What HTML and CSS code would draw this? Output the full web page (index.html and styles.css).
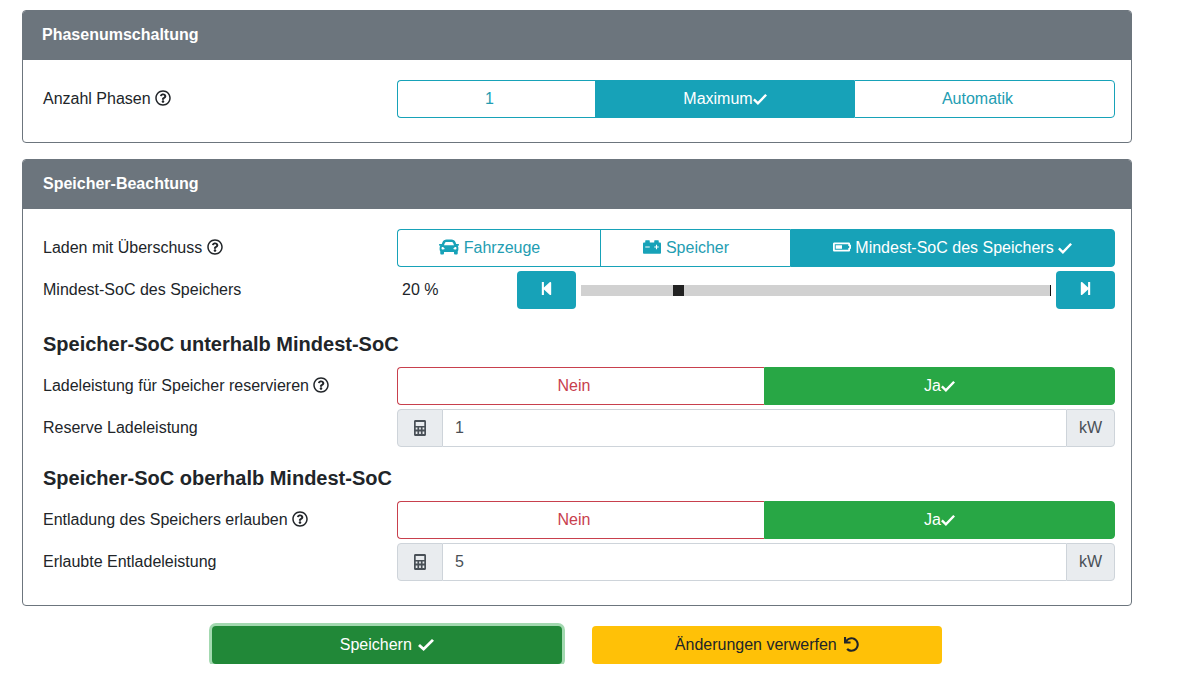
FILE: index.html
```html
<!DOCTYPE html>
<html lang="de">
<head>
<meta charset="utf-8">
<title>Ladeeinstellungen</title>
<link rel="stylesheet" href="styles.css">
</head>
<body>
<svg class="defs" aria-hidden="true">
  <symbol id="i-help" viewBox="0 0 512 512"><path d="M256 8C119.043 8 8 119.083 8 256c0 136.997 111.043 248 248 248s248-111.003 248-248C504 119.083 392.957 8 256 8zm0 448c-110.532 0-200-89.431-200-200 0-110.495 89.472-200 200-200 110.491 0 200 89.471 200 200 0 110.53-89.431 200-200 200zm107.244-255.2c0 67.052-72.421 68.084-72.421 92.863V300c0 6.627-5.373 12-12 12h-45.647c-6.627 0-12-5.373-12-12v-8.659c0-35.745 27.1-50.034 47.579-61.516 17.561-9.845 28.324-16.541 28.324-29.579 0-17.246-21.999-28.693-39.784-28.693-23.189 0-33.894 10.977-48.942 29.969-4.057 5.12-11.46 6.071-16.666 2.124l-27.824-21.098c-5.107-3.872-6.251-11.066-2.644-16.363C184.846 131.491 214.94 112 261.794 112c49.071 0 101.45 38.304 101.45 88.8zM298 368c0 23.159-18.841 42-42 42s-42-18.841-42-42 18.841-42 42-42 42 18.841 42 42z"/></symbol>
  <symbol id="i-check" viewBox="0 0 16 14" preserveAspectRatio="none"><path d="M1 7.5 5.6 12 15 2" fill="none" stroke="currentColor" stroke-width="2.8"/></symbol>
  <symbol id="i-car" viewBox="0 0 512 512"><path d="M499.99 176h-59.87l-16.64-41.6C406.38 91.63 365.57 64 319.5 64h-127c-46.06 0-86.88 27.63-103.99 70.4L71.87 176H12.01C4.2 176-1.53 183.34.37 190.91l6 24C7.7 220.25 12.5 224 18.01 224h20.07C24.65 235.73 16 252.78 16 272v48c0 16.12 6.16 30.67 16 41.93V416c0 17.67 14.33 32 32 32h32c17.67 0 32-14.33 32-32v-32h256v32c0 17.67 14.33 32 32 32h32c17.67 0 32-14.33 32-32v-54.07c9.84-11.25 16-25.8 16-41.93v-48c0-19.22-8.65-36.27-22.07-48H494c5.51 0 10.31-3.75 11.64-9.09l6-24c1.89-7.57-3.84-14.91-11.65-14.91zm-352.06-17.83c7.29-18.22 24.94-30.17 44.57-30.17h127c19.63 0 37.28 11.95 44.57 30.17L384 208H128l19.93-49.83zM96 319.8c-19.2 0-32-12.76-32-31.9S76.8 256 96 256s48 28.71 48 47.85-28.8 15.95-48 15.95zm320 0c-19.2 0-48 3.19-48-15.95S396.8 256 416 256s32 12.76 32 31.9-12.8 31.9-32 31.9z"/></symbol>
  <symbol id="i-carbat" viewBox="0 0 512 512"><path d="M480 128h-32V80c0-8.84-7.16-16-16-16h-96c-8.84 0-16 7.16-16 16v48H192V80c0-8.84-7.16-16-16-16H80c-8.84 0-16 7.16-16 16v48H32c-17.67 0-32 14.33-32 32v256c0 17.67 14.33 32 32 32h448c17.67 0 32-14.33 32-32V160c0-17.67-14.33-32-32-32zM192 264c0 4.42-3.58 8-8 8H72c-4.42 0-8-3.58-8-8v-16c0-4.42 3.58-8 8-8h112c4.42 0 8 3.58 8 8v16zm256 0c0 4.42-3.58 8-8 8h-40v40c0 4.42-3.58 8-8 8h-16c-4.42 0-8-3.58-8-8v-40h-40c-4.42 0-8-3.58-8-8v-16c0-4.42 3.58-8 8-8h40v-40c0-4.42 3.58-8 8-8h16c4.42 0 8 3.58 8 8v40h40c4.42 0 8 3.58 8 8v16z"/></symbol>
  <symbol id="i-bat" viewBox="0 0 640 512"><path d="M544 160v64h32v64h-32v64H64V160h480m16-64H48c-26.51 0-48 21.49-48 48v224c0 26.51 21.49 48 48 48h512c26.51 0 48-21.49 48-48v-48h16c17.673 0 32-14.327 32-32V208c0-17.673-14.327-32-32-32h-16v-32c0-26.51-21.49-48-48-48zm-240 96H96v128h224V192z"/></symbol>
  <symbol id="i-calc" viewBox="0 0 448 512" preserveAspectRatio="none"><path fill-rule="evenodd" d="M48 0h352c26 0 48 22 48 48v416c0 26-22 48-48 48H48c-26 0-48-22-48-48V48C0 22 22 0 48 0zM64 64v128h320V64zM64 240v64h64v-64zM192 240v64h64v-64zM320 240v64h64v-64zM64 368v80h64v-80zM192 368v80h64v-80zM320 368v80h64v-80z"/></symbol>
  <symbol id="i-back" viewBox="0 0 448 512"><path d="M64 468V44c0-6.6 5.4-12 12-12h48c6.6 0 12 5.4 12 12v176.4l195.5-181C352.1 22.3 384 36.6 384 64v384c0 27.4-31.9 41.7-52.5 24.6L136 292.7V468c0 6.6-5.4 12-12 12H76c-6.6 0-12-5.4-12-12z"/></symbol>
  <symbol id="i-fwd" viewBox="0 0 448 512"><path d="M384 44v424c0 6.6-5.4 12-12 12h-48c-6.6 0-12-5.4-12-12V291.6l-195.5 181C95.9 489.7 64 475.4 64 448V64c0-27.4 31.9-41.7 52.5-24.6L312 219.3V44c0-6.6 5.4-12 12-12h48c6.6 0 12 5.4 12 12z"/></symbol>
  <symbol id="i-undo" viewBox="0 0 512 512"><path d="M212.333 224.333H12c-6.627 0-12-5.373-12-12V12C0 5.373 5.373 0 12 0h48c6.627 0 12 5.373 12 12v78.112C117.773 39.279 184.26 7.47 258.175 8.007c136.906.994 246.448 111.623 246.157 248.532C504.041 393.258 393.12 504 256.333 504c-64.089 0-122.496-24.313-166.51-64.215-5.099-4.622-5.334-12.554-.467-17.42l33.967-33.967c4.474-4.474 11.662-4.717 16.401-.525C170.76 415.336 211.58 432 256.333 432c97.268 0 176-78.716 176-176 0-97.267-78.716-176-176-176-58.496 0-110.28 28.476-142.274 72.333h98.274c6.627 0 12 5.373 12 12v48c0 6.627-5.373 12-12 12z"/></symbol>
</svg>

<main class="page">
  <section class="card">
    <h2 class="card-header">Phasenumschaltung</h2>
    <div class="card-body">
      <div class="row">
        <div class="label">Anzahl Phasen <svg class="ico help"><use href="#i-help"/></svg></div>
        <div class="group g-phases">
          <button class="seg">1<svg class="ico check ghost"><use href="#i-check"/></svg></button>
          <button class="seg on">Maximum<svg class="ico check"><use href="#i-check"/></svg></button>
          <button class="seg">Automatik<svg class="ico check ghost"><use href="#i-check"/></svg></button>
        </div>
      </div>
    </div>
  </section>

  <section class="card card-second">
    <h2 class="card-header indent">Speicher-Beachtung</h2>
    <div class="card-body">
      <div class="row">
        <div class="label">Laden mit Überschuss <svg class="ico help"><use href="#i-help"/></svg></div>
        <div class="group g-mode">
          <button class="seg"><svg class="ico icon-car"><use href="#i-car"/></svg> Fahrzeuge <svg class="ico check ghost"><use href="#i-check"/></svg></button>
          <button class="seg"><svg class="ico icon-carbat"><use href="#i-carbat"/></svg> Speicher <svg class="ico check ghost"><use href="#i-check"/></svg></button>
          <button class="seg on"><svg class="ico icon-bat"><use href="#i-bat"/></svg> Mindest-SoC des Speichers <svg class="ico check"><use href="#i-check"/></svg></button>
        </div>
      </div>
      <div class="row">
        <div class="label">Mindest-SoC des Speichers</div>
        <div class="slider">
          <span class="slider-value">20 %</span>
          <button class="step"><svg class="ico step-ico"><use href="#i-back"/></svg></button>
          <div class="track"><span class="thumb" style="left:19.6%"></span></div>
          <button class="step"><svg class="ico step-ico"><use href="#i-fwd"/></svg></button>
        </div>
      </div>

      <h3 class="subhead subhead-first">Speicher-SoC unterhalb Mindest-SoC</h3>
      <div class="row">
        <div class="label">Ladeleistung für Speicher reservieren <svg class="ico help"><use href="#i-help"/></svg></div>
        <div class="group g-yesno">
          <button class="seg no">Nein<svg class="ico check ghost"><use href="#i-check"/></svg></button>
          <button class="seg yes">Ja<svg class="ico check"><use href="#i-check"/></svg></button>
        </div>
      </div>
      <div class="row">
        <div class="label">Reserve Ladeleistung</div>
        <div class="input-group">
          <span class="addon addon-left"><svg class="ico calc"><use href="#i-calc"/></svg></span>
          <input class="field" value="1">
          <span class="addon addon-right">kW</span>
        </div>
      </div>

      <h3 class="subhead">Speicher-SoC oberhalb Mindest-SoC</h3>
      <div class="row">
        <div class="label">Entladung des Speichers erlauben <svg class="ico help"><use href="#i-help"/></svg></div>
        <div class="group g-yesno">
          <button class="seg no">Nein<svg class="ico check ghost"><use href="#i-check"/></svg></button>
          <button class="seg yes">Ja<svg class="ico check"><use href="#i-check"/></svg></button>
        </div>
      </div>
      <div class="row">
        <div class="label">Erlaubte Entladeleistung</div>
        <div class="input-group">
          <span class="addon addon-left"><svg class="ico calc"><use href="#i-calc"/></svg></span>
          <input class="field" value="5">
          <span class="addon addon-right">kW</span>
        </div>
      </div>
    </div>
  </section>

  <div class="actions">
    <button class="action save">Speichern <svg class="ico check save-check"><use href="#i-check"/></svg></button>
    <button class="action discard">Änderungen verwerfen <svg class="ico undo"><use href="#i-undo"/></svg></button>
  </div>
</main>
</body>
</html>
```
FILE: styles.css
```css
* { box-sizing: border-box; }

html, body { margin: 0; background: #fff; }

body {
  font-family: "Liberation Sans", Arial, sans-serif;
  font-size: 16px;
  line-height: 24px;
  color: #212529;
}

.defs { display: none; }

.page {
  width: 1110px;
  margin-left: 22px;
  padding-top: 10px;
}

.card {
  border: 1px solid #6c757d;
  border-radius: 4px;
  overflow: hidden;
}

.card-second { margin-top: 16px; }

.card-header {
  margin: 0;
  height: 49px;
  padding: 0 19px;
  background: #6c757d;
  color: #fff;
  font-size: 16px;
  font-weight: 700;
  line-height: 47px;
}

.card-header.indent { padding-left: 20px; }

.card-body { padding: 20px 16px 24px 20px; }

.row {
  display: grid;
  grid-template-columns: 354px 718px;
  align-items: center;
  height: 38px;
}

.row + .row { margin-top: 4px; }

.ico {
  display: inline-block;
  fill: currentColor;
  vertical-align: -2px;
}

.help { width: 16px; height: 16px; }
.check { width: 14px; height: 12px; vertical-align: -1px; }
.ghost { visibility: hidden; }
.icon-car { width: 20px; height: 20px; vertical-align: -4px; }
.icon-carbat { width: 18px; height: 18px; vertical-align: -3px; }
.icon-bat { width: 18px; height: 16px; }
.calc { width: 12px; height: 16px; }
.step-ico { width: 15px; height: 15px; vertical-align: -1px; }
.save-check { width: 16px; height: 13px; margin-left: 2px; }
.undo { width: 15px; height: 15px; margin-left: 3px; }

.group { display: grid; height: 38px; }
.g-phases { grid-template-columns: 198px 259px 261px; }
.g-mode { grid-template-columns: 203px 190px 325px; }
.g-yesno { grid-template-columns: 367px 351px; }

button { font: inherit; cursor: pointer; }

.seg {
  padding: 0;
  background: #fff;
  border: 1px solid #17a2b8;
  color: #239db2;
  border-radius: 0;
  white-space: nowrap;
}

.seg:not(:last-child) { border-right: 0; }
.seg:first-child { border-radius: 4px 0 0 4px; }
.seg:last-child { border-radius: 0 4px 4px 0; }
.seg .ico { color: #17a2b8; }
.seg.on { background: #17a2b8; color: #fff; }
.seg.on .ico, .seg.yes .ico { color: #fff; }
.seg.no { border-color: #c8404d; border-right: 0; color: #c8404d; }
.seg.yes { background: #28a745; border-color: #28a745; color: #fff; }

.slider {
  display: flex;
  align-items: center;
  height: 38px;
}

.slider-value {
  width: 120px;
  padding-left: 5px;
}

.step {
  width: 59px;
  height: 38px;
  padding: 0;
  border: 0;
  border-radius: 4px;
  background: #17a2b8;
  color: #fff;
}

.track {
  position: relative;
  flex: 1;
  height: 11px;
  margin: 0 5px;
  background: #d1d1d1;
  border-right: 1px solid #111;
}

.thumb {
  position: absolute;
  top: 0;
  width: 11px;
  height: 11px;
  background: #222;
}

.subhead {
  margin: 20px 0 12px;
  height: 22px;
  font-size: 20px;
  font-weight: 700;
  line-height: 22px;
}

.subhead-first { margin-top: 24px; }

.input-group { display: flex; height: 38px; }

.addon {
  display: flex;
  align-items: center;
  justify-content: center;
  background: #e9ecef;
  border: 1px solid #ced4da;
  color: #495057;
}

.addon-left { width: 46px; border-radius: 4px 0 0 4px; }
.addon-right { width: 49px; border-radius: 0 4px 4px 0; }

.field {
  flex: 1;
  min-width: 0;
  padding: 0 12px;
  border: 1px solid #ced4da;
  border-width: 1px 0;
  font: inherit;
  color: #495057;
  outline: 0;
}

.actions {
  display: flex;
  gap: 30px;
  margin-top: 20px;
  padding-left: 190px;
}

.action {
  width: 350px;
  height: 38px;
  padding: 0;
  border: 0;
  border-radius: 4px;
}

.save {
  background: #218838;
  color: #fff;
  box-shadow: 0 0 0 3px rgba(72, 180, 97, .5);
}

.discard { background: #ffc107; color: #212529; }
```
